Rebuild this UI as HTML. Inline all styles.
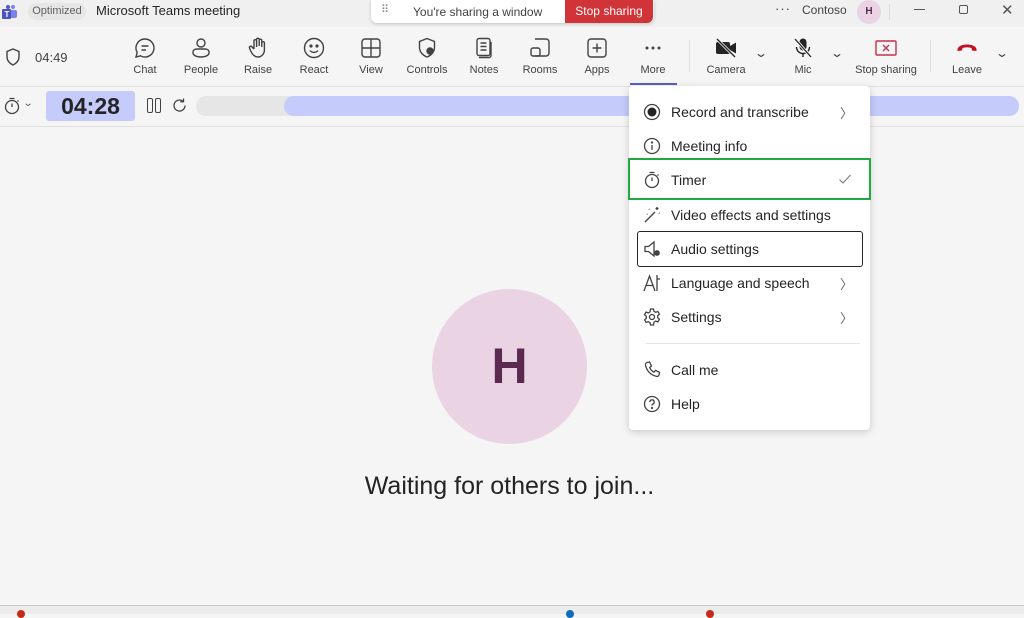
<!DOCTYPE html>
<html><head><meta charset="utf-8"><style>
*{margin:0;padding:0;box-sizing:border-box}
body{width:1024px;height:614px;overflow:hidden;background:#f5f5f5;font-family:"Liberation Sans",sans-serif;color:#242424;position:relative}
.abs{position:absolute}
.tb{left:0;top:0;width:1024px;height:27px;background:#f0f0f0}
.tool{position:absolute;top:36px;width:60px;text-align:center;font-size:11px;color:#424242}
.tool svg{display:block;margin:0 auto 4px;width:24px;height:24px}
.mi{position:absolute;left:642px;font-size:14px;color:#242424;height:20px;line-height:20px}
.mi svg{position:absolute;left:0;top:0;width:20px;height:20px}
.mi span{position:absolute;left:29px;white-space:nowrap}
.chev{position:absolute;left:840px;font-size:13px;color:#616161}
</style></head><body>
<div class="abs tb"></div>
<svg class="abs" style="left:2px;top:4px" width="16" height="16" viewBox="0 0 16 16"><circle cx="11" cy="3" r="2" fill="#7b83eb"/><rect x="8" y="6" width="7" height="8" rx="2" fill="#7b83eb"/><circle cx="6" cy="3" r="2" fill="#5059c9"/><rect x="0" y="5" width="9" height="10" rx="1" fill="#4b53bc"/><text x="2.5" y="13" font-size="8" fill="#fff" font-family="Liberation Sans" font-weight="bold">T</text></svg>
<div class="abs" style="left:28px;top:3px;width:58px;height:17px;border-radius:9px;background:#e6e6e6;font-size:11px;color:#616161;text-align:center;line-height:17px">Optimized</div>
<div class="abs" style="left:96px;top:3px;font-size:13px">Microsoft Teams meeting</div>
<div class="abs" style="left:371px;top:0;width:283px;height:23px;background:#fff;border-radius:0 0 6px 6px;box-shadow:0 1px 3px rgba(0,0,0,.2)"></div>
<div class="abs" style="left:381px;top:3px;font-size:11px;color:#888">⠿</div>
<div class="abs" style="left:413px;top:5px;font-size:12px;color:#424242">You're sharing a window</div>
<div class="abs" style="left:565px;top:0;width:88px;height:23px;background:#d13438;border-radius:0 0 6px 0;color:#fff;font-size:12px;text-align:center;line-height:23px">Stop sharing</div>
<div class="abs" style="left:775px;top:1px;font-size:13px;color:#424242;letter-spacing:1px">···</div>
<div class="abs" style="left:802px;top:3px;font-size:12px;color:#424242">Contoso</div>
<div class="abs" style="left:857px;top:0;width:24px;height:24px;border-radius:50%;background:#ead3e3;color:#5b2a4e;font-size:10px;font-weight:bold;text-align:center;line-height:24px">H</div>
<div class="abs" style="left:889px;top:4px;width:1px;height:16px;background:#ddd"></div>
<div class="abs" style="left:914px;top:9px;width:11px;height:1px;background:#555"></div>
<div class="abs" style="left:959px;top:5px;width:9px;height:9px;border:1px solid #555;border-radius:2px"></div>
<div class="abs" style="left:1001px;top:1px;font-size:15px;color:#555">✕</div>
<div class="abs" style="left:0;top:86px;width:1024px;height:1px;background:#e0e0e0"></div>
<svg class="abs" style="left:4px;top:47px" width="18" height="20" viewBox="0 0 18 20"><path d="M9 2 L15 4.5 V10 C15 14 12 16.5 9 18 C6 16.5 3 14 3 10 V4.5 Z" fill="none" stroke="#424242" stroke-width="1.4"/></svg>
<div class="abs" style="left:35px;top:50px;font-size:13px;color:#424242">04:49</div>

<div class="tool" style="left:115px"><svg viewBox="0 0 24 24" fill="none" stroke="#424242" stroke-width="1.4"><path d="M12 3a9 9 0 1 1-4.5 16.8L3 21l1.2-4.5A9 9 0 0 1 12 3z"/><path d="M8.5 10h7M8.5 14h4.5"/></svg>Chat</div>
<div class="tool" style="left:171px"><svg viewBox="0 0 24 24" fill="none" stroke="#424242" stroke-width="1.4"><circle cx="12" cy="7" r="4"/><path d="M4 16c0-2 2-3 4-3h8c2 0 4 1 4 3v1c0 2-3 4-8 4s-8-2-8-4z"/></svg>People</div>
<div class="tool" style="left:228px"><svg viewBox="0 0 24 24" fill="none" stroke="#424242" stroke-width="1.4"><path d="M8 13V5a1.3 1.3 0 0 1 2.6 0v6M10.6 10V3.5a1.3 1.3 0 0 1 2.6 0V10M13.2 10V4.5a1.3 1.3 0 0 1 2.6 0V11M15.8 11V7a1.3 1.3 0 0 1 2.6 0v7c0 4-3 7-6.5 7S6 18 4.5 14.5L3.5 12a1.3 1.3 0 0 1 2.3-1.2L8 13"/></svg>Raise</div>
<div class="tool" style="left:284px"><svg viewBox="0 0 24 24" fill="none" stroke="#424242" stroke-width="1.4"><circle cx="12" cy="12" r="9.5"/><circle cx="9" cy="10" r=".9" fill="#424242"/><circle cx="15" cy="10" r=".9" fill="#424242"/><path d="M8 14.5c2 2.5 6 2.5 8 0"/></svg>React</div>
<div class="tool" style="left:341px"><svg viewBox="0 0 24 24" fill="none" stroke="#424242" stroke-width="1.4"><rect x="3" y="3" width="18" height="18" rx="3"/><path d="M12 3v18M3 12h18"/></svg>View</div>
<div class="tool" style="left:397px"><svg viewBox="0 0 24 24" fill="none" stroke="#424242" stroke-width="1.4"><path d="M12 2.5l7.5 3v6c0 4.5-3.5 8-7.5 9.5C8 19.5 4.5 16 4.5 11.5v-6z"/><circle cx="15" cy="15" r="3" fill="#424242"/></svg>Controls</div>
<div class="tool" style="left:454px"><svg viewBox="0 0 24 24" fill="none" stroke="#424242" stroke-width="1.4"><rect x="5" y="2.5" width="13" height="17" rx="2"/><path d="M8.5 7h6M8.5 10.5h6M8.5 14h6M7 21.5h10a2 2 0 0 0 2-2V6"/></svg>Notes</div>
<div class="tool" style="left:510px"><svg viewBox="0 0 24 24" fill="none" stroke="#424242" stroke-width="1.4"><path d="M7 3h11a3 3 0 0 1 3 3v11a3 3 0 0 1-3 3H7"/><rect x="3" y="12" width="9" height="8" rx="2"/></svg>Rooms</div>
<div class="tool" style="left:567px"><svg viewBox="0 0 24 24" fill="none" stroke="#424242" stroke-width="1.4"><rect x="3" y="3" width="18" height="18" rx="3"/><path d="M12 7.5v9M7.5 12h9"/></svg>Apps</div>
<div class="tool" style="left:623px"><svg viewBox="0 0 24 24" fill="#424242"><circle cx="6" cy="12" r="1.5"/><circle cx="12" cy="12" r="1.5"/><circle cx="18" cy="12" r="1.5"/></svg>More</div>
<div class="abs" style="left:630px;top:83px;width:47px;height:2px;background:#5b5fc7"></div>
<div class="abs" style="left:689px;top:40px;width:1px;height:32px;background:#ddd"></div>
<div class="tool" style="left:696px"><svg viewBox="0 0 24 24"><rect x="2" y="6" width="14" height="12" rx="2" fill="#242424"/><path d="M16 10l6-3.5v11L16 14z" fill="#242424"/><path d="M3 3l18 18" stroke="#f5f5f5" stroke-width="3"/><path d="M3 3l18 18" stroke="#242424" stroke-width="1.3"/></svg>Camera</div>
<div class="abs" style="left:756px;top:46px;font-size:12px;color:#424242;transform:scaleX(1.4)">⌄</div>
<div class="tool" style="left:773px"><svg viewBox="0 0 24 24"><rect x="8.5" y="2.5" width="7" height="12" rx="3.5" fill="#242424"/><path d="M5.5 11a6.5 6.5 0 0 0 13 0M12 17.5V21" fill="none" stroke="#242424" stroke-width="1.4"/><path d="M4 3l16 18" stroke="#f5f5f5" stroke-width="3"/><path d="M4 3l16 18" stroke="#242424" stroke-width="1.3"/></svg>Mic</div>
<div class="abs" style="left:832px;top:46px;font-size:12px;color:#424242;transform:scaleX(1.4)">⌄</div>
<div class="tool" style="left:851px;width:70px"><svg viewBox="0 0 24 24" fill="none" stroke="#c4314b" stroke-width="1.4"><rect x="2" y="5" width="20" height="14" rx="1"/><path d="M9 9l6 6M15 9l-6 6"/></svg>Stop sharing</div>
<div class="abs" style="left:930px;top:40px;width:1px;height:32px;background:#ddd"></div>
<div class="tool" style="left:937px"><svg viewBox="0 0 24 24"><path d="M2.5 13.5c0-3 4.5-5 9.5-5s9.5 2 9.5 5v1.5l-4.5-.5-.5-2.5c-3-1-6-1-9 0l-.5 2.5-4.5.5z" fill="#c50f1f"/></svg>Leave</div>
<div class="abs" style="left:997px;top:46px;font-size:12px;color:#424242;transform:scaleX(1.4)">⌄</div>

<svg class="abs" style="left:3px;top:97px" width="18" height="18" viewBox="0 0 18 18" fill="none" stroke="#424242" stroke-width="1.3"><circle cx="9" cy="10" r="6.5"/><path d="M6.5 1.5h5M9 10V6.5M14.5 3.5l1 1"/></svg>
<div class="abs" style="left:24px;top:98px;font-size:10px;color:#616161;transform:scaleX(1.3)">⌄</div>
<div class="abs" style="left:46px;top:91px;width:89px;height:30px;background:#c5cbfa;border-radius:3px;text-align:center;line-height:30px;font-size:23px;font-weight:bold;color:#242424">04:28</div>
<div class="abs" style="left:147px;top:98px;width:6px;height:15px;border:1.3px solid #424242;border-radius:2px"></div>
<div class="abs" style="left:155px;top:98px;width:6px;height:15px;border:1.3px solid #424242;border-radius:2px"></div>
<svg class="abs" style="left:171px;top:97px" width="17" height="17" viewBox="0 0 17 17" fill="none" stroke="#424242" stroke-width="1.3"><path d="M14 8.5a5.5 5.5 0 1 1-2-4.2M12.5 1.5v3.2H9.3"/></svg>
<div class="abs" style="left:196px;top:96px;width:823px;height:20px;background:#e6e6e6;border-radius:10px"></div>
<div class="abs" style="left:284px;top:96px;width:735px;height:20px;background:#c5cbfa;border-radius:10px"></div>
<div class="abs" style="left:0;top:126px;width:1024px;height:1px;background:#e0e0e0"></div>

<div class="abs" style="left:432px;top:289px;width:155px;height:155px;border-radius:50%;background:#ead3e3;color:#5b2a4e;font-size:50px;font-weight:bold;text-align:center;line-height:155px">H</div>
<div class="abs" style="left:0;top:472px;width:1019px;text-align:center;font-size:25px;color:#242424">Waiting for others to join...</div>

<div class="abs" style="left:0;top:605px;width:1024px;height:1px;background:#c8c8c8"></div>
<div class="abs" style="left:0;top:606px;width:1024px;height:8px;background:#ececec"></div>
<div class="abs" style="left:17px;top:610px;width:8px;height:8px;border-radius:50%;background:#c42b1c"></div>
<div class="abs" style="left:566px;top:610px;width:8px;height:8px;border-radius:50%;background:#0f6cbd"></div>
<div class="abs" style="left:706px;top:610px;width:8px;height:8px;border-radius:50%;background:#c42b1c"></div>

<div class="abs" style="left:629px;top:86px;width:241px;height:344px;background:#fff;border-radius:4px;box-shadow:0 2px 8px rgba(0,0,0,.18)"></div>
<div class="abs" style="left:628px;top:158px;width:243px;height:42px;border:2px solid #22a843"></div>
<div class="abs" style="left:637px;top:231px;width:226px;height:36px;border:1.5px solid #242424;border-radius:3px"></div>
<div class="abs" style="left:646px;top:343px;width:214px;height:1px;background:#e6e6e6"></div>

<div class="mi" style="top:102px"><svg viewBox="0 0 20 20"><circle cx="10" cy="10" r="7.5" fill="none" stroke="#424242" stroke-width="1.3"/><circle cx="10" cy="10" r="4.5" fill="#242424"/></svg><span>Record and transcribe</span></div>
<div class="chev" style="top:103px">〉</div>
<div class="mi" style="top:136px"><svg viewBox="0 0 20 20" fill="none" stroke="#424242" stroke-width="1.3"><circle cx="10" cy="10" r="7.5"/><path d="M10 9v5"/><circle cx="10" cy="6.5" r=".5" fill="#424242"/></svg><span>Meeting info</span></div>
<div class="mi" style="top:170px"><svg viewBox="0 0 20 20" fill="none" stroke="#424242" stroke-width="1.3"><circle cx="10" cy="11" r="6.5"/><path d="M7.5 2.5h5M10 11V7.5M15.5 4.5l1 1"/></svg><span>Timer</span></div>
<svg class="abs" style="left:838px;top:173px" width="14" height="12" viewBox="0 0 14 12" fill="none" stroke="#757575" stroke-width="1.1"><path d="M1.5 6.5l3.5 3.5L12.5 2"/></svg>
<div class="mi" style="top:205px"><svg viewBox="0 0 20 20" fill="none" stroke="#424242" stroke-width="1.3"><path d="M3 17L13 7"/><path d="M15 2v3M13.5 3.5h3M17 8l.5.5M7 4l.5.5M5 9l.5.5"/></svg><span>Video effects and settings</span></div>
<div class="mi" style="top:239px"><svg viewBox="0 0 20 20" fill="none" stroke="#424242" stroke-width="1.3"><path d="M3 7.5h3.5L12 3v14l-5.5-4.5H3z"/><circle cx="15" cy="14" r="2.2" fill="#424242"/></svg><span>Audio settings</span></div>
<div class="mi" style="top:273px"><svg viewBox="0 0 20 20" fill="none" stroke="#424242" stroke-width="1.3"><path d="M2 18L7.5 3 13 18M4.5 12.5h6M15 2v16M15 6h3"/></svg><span>Language and speech</span></div>
<div class="chev" style="top:274px">〉</div>
<div class="mi" style="top:307px"><svg viewBox="0 0 20 20" fill="none" stroke="#424242" stroke-width="1.3"><path d="M8.5 2h3l.5 2.3 1.7 1 2.2-.8 1.5 2.6-1.7 1.6v2l1.7 1.6-1.5 2.6-2.2-.8-1.7 1L11.5 18h-3L8 15.7l-1.7-1-2.2.8-1.5-2.6 1.7-1.6v-2L2.6 7.7l1.5-2.6 2.2.8 1.7-1z"/><circle cx="10" cy="10" r="2.5"/></svg><span>Settings</span></div>
<div class="chev" style="top:308px">〉</div>
<div class="mi" style="top:360px"><svg viewBox="0 0 20 20" fill="none" stroke="#424242" stroke-width="1.3"><path d="M5 2.5l2.5-.5 2 4-1.8 1.5c.8 2 2.3 3.7 4.3 4.6l1.6-1.7 4 2-.6 2.6c-.3 1-1.3 1.6-2.3 1.4C8.5 15.2 4.5 10.5 3.5 5c-.2-1.1.5-2.2 1.5-2.5z"/></svg><span>Call me</span></div>
<div class="mi" style="top:394px"><svg viewBox="0 0 20 20" fill="none" stroke="#424242" stroke-width="1.3"><circle cx="10" cy="10" r="7.5"/><path d="M7.8 8a2.2 2.2 0 1 1 3.2 2c-.7.4-1 .8-1 1.6"/><circle cx="10" cy="14" r=".5" fill="#424242"/></svg><span>Help</span></div>
</body></html>
